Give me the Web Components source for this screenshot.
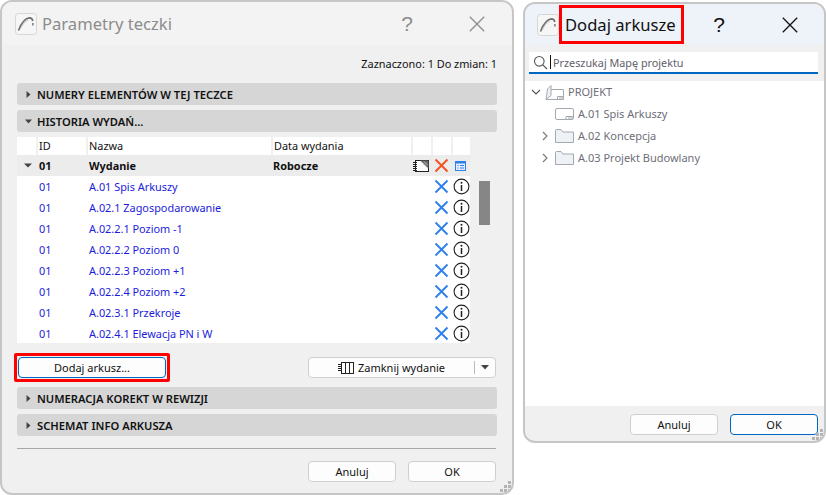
<!DOCTYPE html>
<html lang="pl">
<head>
<meta charset="utf-8">
<title>Parametry teczki</title>
<style>
  html, body { margin: 0; height: 100%; background: #fff; overflow: hidden; }
  body { font: 11px "Noto Sans", "Open Sans", sans-serif; color: #111; }
  #page { display: flex; gap: 9px; align-items: flex-start; width: 826px; height: 495px; }
</style>
</head>
<body>
<div id="page">
  <folder-dialog></folder-dialog>
  <sheet-dialog></sheet-dialog>
</div>

<script>
const ICONS = {
  logo: `<svg width="22" height="22" viewBox="0 0 22 22"><rect x=".5" y=".5" width="21" height="21" rx="3" fill="#f6f6f6" stroke="#d6d6d6"/><path d="M3.500 17.500 C6 11 10 5 14.500 4.800 C16.500 4.800 17.500 6 17.800 8" fill="none" stroke="#6f6f6f" stroke-width="1.700"/><path d="M17.900 10v2.500" stroke="#777" stroke-width="1.500"/><path d="M5 16.500 C7 12 10 8.500 13 7" fill="none" stroke="#c4c4c4" stroke-width="1"/></svg>`,
  close: `<svg width="16" height="16" viewBox="0 0 16 16"><path d="M.8 .8 15.200 15.200M15.200 .8 .8 15.200" stroke="currentColor" stroke-width="1.300" fill="none"/></svg>`,
  blueX: `<svg width="15" height="15" viewBox="0 0 15 15"><path d="M1.500 1.500 13.500 13.500M13.500 1.500 1.500 13.500" stroke="#2f80ed" stroke-width="1.900" fill="none"/></svg>`,
  redX: `<svg width="15" height="15" viewBox="0 0 15 15"><path d="M1.500 1.500 13.500 13.500M13.500 1.500 1.500 13.500" stroke="#f4511e" stroke-width="1.900" fill="none"/></svg>`,
  info: `<svg width="17" height="17" viewBox="0 0 17 17"><circle cx="8.500" cy="8.500" r="7.400" fill="#fff" stroke="#222" stroke-width="1.100"/><path d="M8.500 7v6" stroke="#222" stroke-width="1.500"/><circle cx="8.500" cy="4.800" r="1" fill="#222"/></svg>`,
  book: `<svg width="16" height="12" viewBox="0 0 16 12"><rect x="2.500" y=".5" width="13" height="11" fill="#fff" stroke="#222"/><path d="M0 2.500h4M0 4.500h4M0 6.500h4M0 8.500h4M0 10.500h4" stroke="#222"/><path d="M7 .5h8.500v8z" fill="#666"/><path d="M8 1.500l6.500 7M11 1.500l3.500 3.500" stroke="#ddd" stroke-width=".8"/></svg>`,
  form: `<svg width="11" height="10" viewBox="0 0 11 10"><rect x=".5" y=".5" width="10" height="9" fill="#e3edfd" stroke="#2f80ed"/><path d="M.5 1.800h10" stroke="#2f80ed" stroke-width="1.600"/><path d="M2.500 4.500h1M5 4.500h4M2.500 7h1M5 7h4" stroke="#2f80ed"/></svg>`,
  columns: `<svg width="16" height="12" viewBox="0 0 16 12"><rect x="3.500" y=".5" width="12" height="11" fill="#fff" stroke="#222"/><path d="M7.500 .5v11M11.500 .5v11M0 2.500h3M0 4.500h3M0 6.500h3M0 8.500h3" stroke="#222"/></svg>`,
  search: `<svg width="15" height="15" viewBox="0 0 15 15"><circle cx="6.300" cy="6.300" r="4.800" fill="none" stroke="#555" stroke-width="1.100"/><path d="M9.800 9.800 14 14" stroke="#555" stroke-width="1.200"/></svg>`,
  chevDown: `<svg width="10" height="10" viewBox="0 0 10 10"><path d="M1 3l4 4 4-4" fill="none" stroke="#555" stroke-width="1.100"/></svg>`,
  chevRight: `<svg width="10" height="10" viewBox="0 0 10 10"><path d="M3 1l4 4-4 4" fill="none" stroke="#777" stroke-width="1.100"/></svg>`,
  project: `<svg width="19" height="15" viewBox="0 0 19 15"><path d="M6 4.500h12.500v10H1" fill="#fff" stroke="#a4a9b0"/><path d="M1 14.500 2.500 4 6 .5V10.500z" fill="#eef1f5" stroke="#a4a9b0"/><path d="M12.500 14.500v-3h6M14 13h4.500" fill="none" stroke="#a4a9b0"/></svg>`,
  sheet: `<svg width="19" height="12" viewBox="0 0 19 12"><rect x=".5" y=".5" width="18" height="11" rx="1.500" fill="#fff" stroke="#a4a9b0"/><path d="M11 11.500v-3h7.500M13 10h5" fill="none" stroke="#a4a9b0"/></svg>`,
  folder: `<svg width="19" height="14" viewBox="0 0 19 14"><path d="M.5 13.500V1.500Q.5 .5 1.500 .5H6L8 3h10.500v10.500z" fill="#eef1f6" stroke="#a4a9b0"/></svg>`,
  grip: `<svg width="12" height="12" viewBox="0 0 12 12" fill="#b4b4b4"><rect x="8" y="0" width="3" height="3"/><rect x="4" y="4" width="3" height="3"/><rect x="8" y="4" width="3" height="3"/><rect x="0" y="8" width="3" height="3"/><rect x="4" y="8" width="3" height="3"/><rect x="8" y="8" width="3" height="3"/></svg>`
};

const shared = `
  :host { box-sizing: border-box; }
  *, *::before, *::after { box-sizing: border-box; }
`;

class DialogFrame extends HTMLElement {
  constructor() {
    super();
    this.attachShadow({ mode: "open" });
    this.shadowRoot.innerHTML = `
      <style>
        ${shared}
        :host {
          display: flex;
          flex-direction: column;
          position: relative;
          border: 2px solid #c6c6c6;
          border-radius: 12px;
          background: #f0f0f0;
          overflow: hidden;
        }
        .grip { position: absolute; right: 0; bottom: 0; height: 12px; line-height: 0; }
      </style>
      <slot></slot>
      <div class="grip">${ICONS.grip}</div>
    `;
  }
}

class DialogTitle extends HTMLElement {
  constructor() {
    super();
    this.attachShadow({ mode: "open" });
    this.shadowRoot.innerHTML = `
      <style>
        ${shared}
        :host {
          display: flex;
          align-items: center;
          height: var(--title-h, 43px);
          flex: none;
          padding-left: var(--title-pad, 13px);
          background: var(--title-bg, #f3f3f3);
          color: var(--title-color, #8c8c8c);
        }
        .logo { line-height: 0; margin-right: 5px; }
        .text { font-size: 16.600px; white-space: nowrap; }
        .text.marked {
          color: #111;
          border: 3px solid #ff0000;
          height: 39px;
          display: flex;
          align-items: center;
          padding: 0 3px;
          width: 125px;
          margin-left: -5px;
        }
        .help { font-size: 21px; font-family: "Liberation Sans", sans-serif; width: 20px; text-align: center; }
        .close { line-height: 0; }
        .spring { flex: 1; }
      </style>
      <div class="logo">${ICONS.logo}</div>
      <div class="text"><slot></slot></div>
      <div class="spring"></div>
      <div class="help">?</div>
      <div class="close">${ICONS.close}</div>
    `;
    this.shadowRoot.querySelector(".text").classList.toggle("marked", this.hasAttribute("marked"));
    this.shadowRoot.querySelector(".help").style.marginRight = this.getAttribute("gap") + "px";
    this.shadowRoot.querySelector(".close").style.marginRight = this.getAttribute("end") + "px";
  }
}

class PanelBar extends HTMLElement {
  constructor() {
    super();
    this.attachShadow({ mode: "open" });
    const open = this.hasAttribute("open");
    this.shadowRoot.innerHTML = `
      <style>
        ${shared}
        :host {
          display: flex;
          align-items: center;
          height: 22px;
          background: #d6d6d6;
          border-radius: 3px;
          font-weight: 600;
          font-size: 11.200px;
          color: #111;
          padding-left: 8px;
        }
        .tri { width: 12px; line-height: 0; }
      </style>
      <div class="tri">
        <svg width="7" height="7" viewBox="0 0 7 7"><path d="${open ? "M0 1.500h7L3.500 5.500z" : "M1.500 0v7L5.500 3.500z"}" fill="#444"/></svg>
      </div>
      <slot></slot>
    `;
  }
}

class PushButton extends HTMLElement {
  constructor() {
    super();
    this.attachShadow({ mode: "open" });
    this.shadowRoot.innerHTML = `
      <style>
        ${shared}
        :host {
          display: flex;
          align-items: center;
          justify-content: center;
          gap: 4px;
          height: 21px;
          width: 88px;
          background: #fdfdfd;
          border: 1px solid #cfcfcf;
          border-radius: 4px;
          color: #111;
          font-size: 11px;
        }
        :host([primary]) { border: 1px solid #0067c0; }
      </style>
      <slot></slot>
    `;
  }
}

class IssueRow extends HTMLElement {
  constructor() {
    super();
    this.attachShadow({ mode: "open" });
    this.shadowRoot.innerHTML = `
      <style>
        ${shared}
        :host {
          display: grid;
          grid-template-columns: 72px 344px 20px 1fr;
          align-items: center;
          height: 21px;
          background: #fff;
          color: #1c1cdc;
          font-size: 10.900px;
        }
        .id { padding-left: 22px; }
        .x { justify-self: start; margin-left: 1px; line-height: 0; }
        .i { line-height: 0; }
      </style>
      <div class="id">01</div>
      <div class="name"><slot></slot></div>
      <div class="x">${ICONS.blueX}</div>
      <div class="i">${ICONS.info}</div>
    `;
  }
}

class IssueTable extends HTMLElement {
  constructor() {
    super();
    this.attachShadow({ mode: "open" });
    this.shadowRoot.innerHTML = `
      <style>
        ${shared}
        :host { display: flex; margin-top: 5px; gap: 9px; height: 206px; }
        .table { width: 453px; overflow: hidden; }
        .head {
          display: grid;
          grid-template-columns: 19px 50px 185px 140px 20px 20px 19px;
          height: 18px;
          background: #fff;
          font-size: 10.900px;
        }
        .head div { height: 18px; line-height: 18px; border-left: 2px solid #f0f0f0; padding-left: 1px; }
        .head div:first-child { border-left: 0; }
        .group {
          display: grid;
          grid-template-columns: 19px 53px 184px 138px 20px 20px 19px;
          align-items: center;
          height: 21px;
          background: #ececec;
          font-weight: 700;
          font-size: 10.900px;
        }
        .group .cell { line-height: 0; display: flex; justify-content: center; }
        .tri { padding-left: 7px; line-height: 0; }
        .gid { padding-left: 3px; }
        .scroll { width: 11px; padding-top: 44px; }
        .thumb { width: 11px; height: 44px; background: #868686; }
      </style>
      <div class="table">
        <div class="head">
          <div></div><div>ID</div><div>Nazwa</div><div>Data wydania</div><div></div><div></div><div></div>
        </div>
        <div class="group">
          <div class="tri"><svg width="8" height="6" viewBox="0 0 8 6"><path d="M0 .500h8L4 4.500z" fill="#444"/></svg></div>
          <div class="gid">01</div>
          <div>Wydanie</div>
          <div>Robocze</div>
          <div class="cell">${ICONS.book}</div>
          <div class="cell">${ICONS.redX}</div>
          <div class="cell">${ICONS.form}</div>
        </div>
        <slot></slot>
      </div>
      <div class="scroll"><div class="thumb"></div></div>
    `;
  }
}

class TreeRow extends HTMLElement {
  constructor() {
    super();
    this.attachShadow({ mode: "open" });
    const kind = this.getAttribute("kind");
    const chev = this.getAttribute("chev");
    this.shadowRoot.innerHTML = `
      <style>
        ${shared}
        :host {
          display: flex;
          align-items: center;
          height: 22px;
          color: #6e6e78;
          font-size: 11px;
          padding-left: ${this.getAttribute("indent")}px;
        }
        .chev { width: ${this.getAttribute("chevw")}px; line-height: 0; }
        .ico { line-height: 0; margin-right: 4px; }
        .label { padding-bottom: 2px; }
      </style>
      <div class="chev">${chev ? ICONS[chev] : ""}</div>
      <div class="ico">${ICONS[kind]}</div>
      <div class="label"><slot></slot></div>
    `;
  }
}

class FolderDialog extends HTMLElement {
  constructor() {
    super();
    this.attachShadow({ mode: "open" });
    const sheets = [
      "A.01 Spis Arkuszy", "A.02.1 Zagospodarowanie", "A.02.2.1 Poziom -1", "A.02.2.2 Poziom 0",
      "A.02.2.3 Poziom +1", "A.02.2.4 Poziom +2", "A.02.3.1 Przekroje", "A.02.4.1 Elewacja PN i W"
    ];
    this.shadowRoot.innerHTML = `
      <style>
        ${shared}
        :host { display: block; width: 514px; height: 495px; flex: none; }
        dialog-frame { height: 100%; }
        .body { flex: 1; display: flex; flex-direction: column; padding: 0 15px; }
        .status { height: 38px; padding-top: 11px; text-align: right; font-size: 10.900px; line-height: 16px; }
        panel-bar + panel-bar { margin-top: 5px; }
        .actions { display: flex; justify-content: space-between; align-items: center; margin: 10px 1px 5px -3px; }
        .mark { border: 3px solid #ff0000; padding: 1px; border-radius: 2px; }
        .mark push-button { width: 148px; border-color: #0067c0; }
        .split { width: 188px; position: relative; padding-right: 21px; }
        .caret { position: absolute; right: 0; top: 0; bottom: 0; width: 21px; border-left: 1px solid #bbb; margin: 3px 0; display: flex; align-items: center; justify-content: center; }
        .rule { height: 1px; background: #a8a8a8; margin: 12px 1px 0 0; }
        .foot { display: flex; justify-content: flex-end; gap: 12px; margin: 12px 1px 0 0; }
      </style>
      <dialog-frame>
        <dialog-title gap="52" end="27">Parametry teczki</dialog-title>
        <div class="body">
          <div class="status">Zaznaczono: 1 Do zmian: 1</div>
          <panel-bar>NUMERY ELEMENTÓW W TEJ TECZCE</panel-bar>
          <panel-bar open>HISTORIA WYDAŃ...</panel-bar>
          <issue-table>
            ${sheets.map(s => `<issue-row>${s}</issue-row>`).join("")}
          </issue-table>
          <div class="actions">
            <div class="mark"><push-button>Dodaj arkusz...</push-button></div>
            <push-button class="split">
              ${ICONS.columns}<span>Zamknij wydanie</span>
              <div class="caret"><svg width="8" height="5" viewBox="0 0 8 5"><path d="M0 0h8L4 4.500z" fill="#444"/></svg></div>
            </push-button>
          </div>
          <panel-bar>NUMERACJA KOREKT W REWIZJI</panel-bar>
          <panel-bar>SCHEMAT INFO ARKUSZA</panel-bar>
          <div class="rule"></div>
          <div class="foot">
            <push-button>Anuluj</push-button>
            <push-button>OK</push-button>
          </div>
        </div>
      </dialog-frame>
    `;
  }
}

class SheetDialog extends HTMLElement {
  constructor() {
    super();
    this.attachShadow({ mode: "open" });
    this.shadowRoot.innerHTML = `
      <style>
        ${shared}
        :host {
          display: block;
          width: 303px;
          height: 441px;
          margin-top: 2px;
          flex: none;
          --title-bg: #eef2f9;
          --title-color: #111;
          --title-h: 41px;
          --title-pad: 12px;
        }
        dialog-frame { height: 100%; }
        .search { flex: none; height: 36px; padding: 7px 6px 0 4px; background: #f0f0f0; }
        .field {
          display: flex;
          align-items: center;
          height: 22px;
          background: #fff;
          border-bottom: 2px solid #0067c0;
          padding-left: 4px;
          color: #60606a;
          font-size: 10.800px;
          gap: 2px;
        }
        .field .ico { line-height: 0; }
        .caret { width: 1px; height: 14px; background: #111; }
        .tree { flex: 1; background: #fff; }
        .foot {
          flex: none;
          height: 35px;
          display: flex;
          justify-content: flex-end;
          gap: 12px;
          padding: 8px 6px 0 0;
        }
      </style>
      <dialog-frame>
        <dialog-title marked gap="53" end="26">Dodaj arkusze</dialog-title>
        <div class="search">
          <div class="field">
            <span class="ico">${ICONS.search}</span><span class="caret"></span><span>Przeszukaj Mapę projektu</span>
          </div>
        </div>
        <div class="tree">
          <tree-row indent="6" chevw="14" kind="project" chev="chevDown">PROJEKT</tree-row>
          <tree-row indent="15" chevw="15" kind="sheet">A.01 Spis Arkuszy</tree-row>
          <tree-row indent="15" chevw="15" kind="folder" chev="chevRight">A.02 Koncepcja</tree-row>
          <tree-row indent="15" chevw="15" kind="folder" chev="chevRight">A.03 Projekt Budowlany</tree-row>
        </div>
        <div class="foot">
          <push-button>Anuluj</push-button>
          <push-button primary>OK</push-button>
        </div>
      </dialog-frame>
    `;
  }
}

customElements.define("dialog-frame", DialogFrame);
customElements.define("dialog-title", DialogTitle);
customElements.define("panel-bar", PanelBar);
customElements.define("push-button", PushButton);
customElements.define("issue-row", IssueRow);
customElements.define("issue-table", IssueTable);
customElements.define("tree-row", TreeRow);
customElements.define("folder-dialog", FolderDialog);
customElements.define("sheet-dialog", SheetDialog);
</script>
</body>
</html>
